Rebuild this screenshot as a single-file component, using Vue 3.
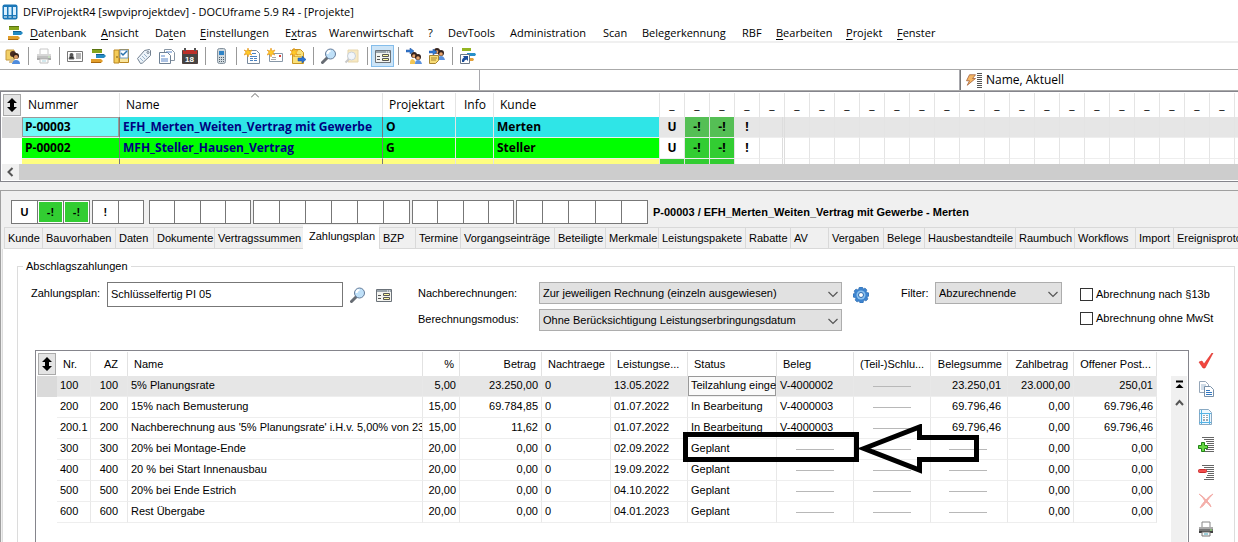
<script setup>
import { ref } from 'vue'

const menu = [
  ['', 'D', 'atenbank'], ['', 'A', 'nsicht'], ['Da', 't', 'en'], ['', 'E', 'instellungen'],
  ['E', 'x', 'tras'], ['Warenwirtschaft', '', ''], ['?', '', ''], ['DevTools', '', ''],
  ['Administration', '', ''], ['Scan', '', ''], ['Belegerkennung', '', ''], ['RBF', '', ''],
  ['', 'B', 'earbeiten'], ['', 'P', 'rojekt'], ['', 'F', 'enster']
]

const tools = [
  { icon: 'user', label: 'Adressen' }, null,
  { icon: 'printer', label: 'Drucken', dim: true }, null,
  { icon: 'card', label: 'Kontakt' }, { icon: 'bars', label: 'Projekte' },
  { icon: 'cupboard', label: 'Ablage' }, { icon: 'tag', label: 'Etikett' },
  { icon: 'docs', label: 'Dokumente' }, { icon: 'calendar', label: 'Kalender' }, null,
  { icon: 'phone', label: 'Telefon' }, null,
  { icon: 'newdoc', label: 'Neues Dokument' }, { icon: 'newmail', label: 'Neue Mail' },
  { icon: 'newfile', label: 'Neue Datei' }, null,
  { icon: 'lens', label: 'Suchen' }, { icon: 'searchfolder', label: 'Ordner suchen', dim: true }, null,
  { icon: 'form', label: 'Formular', active: true }, null,
  { icon: 'toperson', label: 'An Person' }, { icon: 'tonote', label: 'An Notiz' }, null,
  { icon: 'shortcut', label: 'Verknüpfung' }
]

const slots = 24
const projects = [
  { no: 'P-00003', name: 'EFH_Merten_Weiten_Vertrag mit Gewerbe', type: 'O', customer: 'Merten', flags: ['U', '-!', '-!', '!'], tone: 'cyan' },
  { no: 'P-00002', name: 'MFH_Steller_Hausen_Vertrag', type: 'G', customer: 'Steller', flags: ['U', '-!', '-!', '!'], tone: 'green' },
  { no: '', name: '', type: '', customer: '', flags: ['', '', '', ''], tone: 'yellow' }
]

const groups = [
  { cls: 'g3', cells: ['U', '-!', '-!'] },
  { cls: 'g2', cells: ['!', ''] },
  { cls: 'g4 wide-gap', cells: ['', '', '', ''] },
  { cls: 'g6', cells: ['', '', '', '', '', ''] },
  { cls: 'g4', cells: ['', '', '', ''] },
  { cls: 'g5', cells: ['', '', '', '', ''] }
]

const tabs = ['Kunde', 'Bauvorhaben', 'Daten', 'Dokumente', 'Vertragssummen', 'Zahlungsplan', 'BZP', 'Termine', 'Vorgangseinträge', 'Beteiligte', 'Merkmale', 'Leistungspakete', 'Rabatte', 'AV', 'Vergaben', 'Belege', 'Hausbestandteile', 'Raumbuch', 'Workflows', 'Import', 'Ereignisprotokoll']
const activeTab = ref('Zahlungsplan')
const plan = ref('Schlüsselfertig PI 05')

const head = ['Nr.', 'AZ', 'Name', '%', 'Betrag', 'Nachtraege', 'Leistungse...', 'Status', 'Beleg', '(Teil-)Schlu...', 'Belegsumme', 'Zahlbetrag', 'Offener Post...']
const align = ['', 'r az', '', 'r', 'r', '', '', '', '', '', 'r sum', 'r', 'r']
const rows = [
  ['100', '100', '5% Planungsrate', '5,00', '23.250,00', '0', '13.05.2022', 'Teilzahlung eingegangen', 'V-4000002', null, '23.250,01', '23.000,00', '250,01'],
  ['200', '200', '15% nach Bemusterung', '15,00', '69.784,85', '0', '01.07.2022', 'In Bearbeitung', 'V-4000003', null, '69.796,46', '0,00', '69.796,46'],
  ['200.1', '200', "Nachberechnung aus '5% Planungsrate' i.H.v. 5,00% von 23.250,00", '15,00', '11,62', '0', '01.07.2022', 'In Bearbeitung', 'V-4000003', null, '69.796,46', '0,00', '69.796,46'],
  ['300', '300', '20% bei Montage-Ende', '20,00', '0,00', '0', '02.09.2022', 'Geplant', null, null, null, '0,00', '0,00'],
  ['400', '400', '20 % bei Start Innenausbau', '20,00', '0,00', '0', '19.09.2022', 'Geplant', null, null, null, '0,00', '0,00'],
  ['500', '500', '20% bei Ende Estrich', '20,00', '0,00', '0', '04.10.2022', 'Geplant', null, null, null, '0,00', '0,00'],
  ['600', '600', 'Rest Übergabe', '20,00', '0,00', '0', '04.01.2023', 'Geplant', null, null, null, '0,00', '0,00']
]

const actions = [
  { icon: 'check', label: 'Übernehmen' },
  { icon: 'copy', label: 'Kopieren' },
  { icon: 'sheet', label: 'Tabelle' },
  { icon: 'addline', label: 'Zeile einfügen' },
  { icon: 'delline', label: 'Zeile entfernen' },
  { icon: 'cross', label: 'Löschen', dim: true },
  { icon: 'printer', label: 'Drucken' }
]
</script>

<template>
  <div class="app">
    <svg class="sprite" aria-hidden="true">
      <symbol id="i-app" viewBox="0 0 16 16"><rect x=".5" y=".5" width="15" height="15" rx="2" fill="#1976b8" /><path d="M2 3h3v8H2zM6.500 3h3v8h-3zM11 3h3v8h-3z" fill="#d9efff" /><path d="M2 13h3M6.500 13h3M11 13h3" stroke="#fff" /></symbol>
      <symbol id="i-bars" viewBox="0 0 16 16"><path d="M2 1h10v4H2z" fill="#86a51b" /><path d="M2 1h10v1H2z" fill="#58720f" /><path d="M6 6h8l2 2-2 2H6z" fill="#258bc4" /><path d="M6 6h8v1H6z" fill="#135f92" /><path d="M1 11h10l2 2-2 2H1z" fill="#e29e2b" /><path d="M1 14h10v1H1z" fill="#a9670d" /></symbol>
      <symbol id="i-user" viewBox="0 0 16 16"><path d="M1 3q0-1 1-1h7v10H1z" fill="#f2d068" stroke="#c4983b" /><circle cx="8" cy="6" r="3" fill="#4a2d20" /><circle cx="11" cy="8" r="3" fill="#34221b" /><circle cx="11" cy="9" r="2" fill="#dc9c65" /><path d="M7 16q0-4 4-4t4 4z" fill="#4f8cdd" /><path d="M4 15q0-4 3-5l2 2-2 3z" fill="#d9c18e" /></symbol>
      <symbol id="i-printer" viewBox="0 0 16 16"><path d="M4 1h8v6H4z" fill="#fff" stroke="#888" /><path d="M1 6h14v6H1z" fill="#777" /><path d="M1 6h14v2H1z" fill="#aaa" /><path d="M1 10h14v2H1z" fill="#414141" /><path d="M4 11h8v4H4z" fill="#f9f9f9" stroke="#777" /><path d="M6 13h4" stroke="#40a1b8" /><path d="M12 9h2" stroke="#8df46e" /></symbol>
      <symbol id="i-card" viewBox="0 0 16 16"><path d="M.5 3.500h15v10H.5z" fill="#fff" stroke="#777" /><circle cx="4.500" cy="7" r="2" fill="#555" /><path d="M2 11q0-3 2.500-3T7 11zM9 6h5M9 8h5M9 10h5" fill="#333" stroke="#666" /></symbol>
      <symbol id="i-cupboard" viewBox="0 0 16 16"><path d="M1 2h5v13H1z" fill="#f4cc58" stroke="#b98620" /><path d="M4 8v2" stroke="#7b5815" /><path d="M6.500 1.500h9v13h-9z" fill="#f9e49a" stroke="#b98620" /><path d="M7 2h8v8H7z" fill="#fff" stroke="#6d9ac5" /><path d="M8 5l2 2 4-4" fill="none" stroke="#2771ae" stroke-width="1.500" /></symbol>
      <symbol id="i-tag" viewBox="0 0 16 16"><path d="M1.500 10.500l7-8 5-1 1 1v5l-8 7.500-2 .5z" fill="#edf4fa" stroke="#728090" /><circle cx="12" cy="4.500" r="1" fill="#fff" stroke="#728090" /><path d="M4 10l3 3M6 8l3 3M8 6l3 3" stroke="#99b2ca" /></symbol>
      <symbol id="i-docs" viewBox="0 0 16 16"><path d="M5.500 1.500h7l3 3v8h-10z" fill="#fff" stroke="#8794a2" /><path d="M.5 4.500h8l3 3v8H.5z" fill="#fff" stroke="#6f8194" /><path d="M2 8h4M2 11h7M2 13h7M7 4h6" stroke="#5a86c8" /></symbol>
      <symbol id="i-calendar" viewBox="0 0 16 16"><path d="M.5 2.500h15v13H.5z" fill="#444" stroke="#50413e" /><path d="M1 2h14v4H1z" fill="#bb302a" /><path d="M3 0v3M13 0v3" stroke="#555" stroke-width="2" /><text x="3" y="14" font-size="8" font-weight="700" font-family="Liberation Sans, sans-serif" fill="#fff">18</text></symbol>
      <symbol id="i-phone" viewBox="0 0 16 16"><rect x="4.500" y=".5" width="8" height="15" rx="2" fill="#cfd8de" stroke="#85929e" /><path d="M6 3h5v4H6z" fill="#2f83c6" /><path d="M6 9.500h5M6 11.500h5M6 13.500h5" stroke="#53626c" stroke-dasharray="1 1" /></symbol>
      <symbol id="i-star" viewBox="0 0 16 16"><path d="M4 0l1 3 3-1-2 3 2 2-3-1-1 3-1-3-3 1 2-3-2-2 3 1z" fill="#ffca28" stroke="#e4931c" stroke-width=".6" /></symbol>
      <symbol id="i-newdoc" viewBox="0 0 16 16"><path d="M3.500 2.500h9l3 3v10h-12z" fill="#fff" stroke="#78899c" /><path d="M8 5.500h4M6 8.500h7M6 10.500h3M10 10.500h3M6 12.500h3M10 12.500h3" stroke="#4a82c0" /><use href="#i-star" /></symbol>
      <symbol id="i-newmail" viewBox="0 0 16 16"><path d="M2.500 5.500h13v8h-13z" fill="#fff" stroke="#8998a8" /><path d="M4 11.500h5M5 9.500h4" stroke="#aaa" /><path d="M12 7h2v2h-2z" fill="#d8423a" /><use href="#i-star" /></symbol>
      <symbol id="i-newfile" viewBox="0 0 16 16"><path d="M2.500 1.500h8l3 3v11h-11z" fill="#fae17a" stroke="#c99622" /><path d="M6 6.500h5M4 8.500h7" stroke="#e0b73e" /><path d="M8 10h4V8l4 3.500-4 3.500v-2H8z" fill="#2c74d3" stroke="#174f99" stroke-width=".5" /><use href="#i-star" /></symbol>
      <symbol id="i-lens" viewBox="0 0 16 16"><path d="M6.500 9.500l-5 5" stroke="#676c73" stroke-width="3" stroke-linecap="round" /><circle cx="9.500" cy="6" r="5" fill="#bfe0f8" stroke="#647b99" /><path d="M6.500 6q0-3 3-3" fill="none" stroke="#fff" stroke-width="2" /></symbol>
      <symbol id="i-searchfolder" viewBox="0 0 16 16"><path d="M4 2h10v12H4z" fill="#f0d078" stroke="#c8a34c" /><path d="M5.500 10.500l-4 4" stroke="#888" stroke-width="2" /><circle cx="7.500" cy="8" r="4" fill="#e3edf5" stroke="#8698ac" /></symbol>
      <symbol id="i-form" viewBox="0 0 16 16"><path d="M.5 2.500h15v12H.5z" fill="#f4f4f0" stroke="#6b7279" /><path d="M1 3h14v2H1z" fill="#9ba5ad" /><path d="M11 4h1M13 4h1" stroke="#fff" /><path d="M2 8.500h3M2 11.500h3" stroke="#555" /><path d="M7.500 6.500h6v2h-6zM7.500 10.500h6v2h-6z" fill="#fffa9e" stroke="#555" /></symbol>
      <symbol id="i-people" viewBox="0 0 16 16"><circle cx="8" cy="7" r="3" fill="#35221c" /><circle cx="8" cy="8" r="1.800" fill="#e8a66e" /><circle cx="12" cy="9" r="3" fill="#35221c" /><circle cx="12" cy="10" r="1.800" fill="#e8a66e" /><path d="M4 15q0-4 3-4l2 2v3H4z" fill="#f3c653" /><path d="M9 16q0-4 3-4t4 4z" fill="#5b91dd" /></symbol>
      <symbol id="i-arrow" viewBox="0 0 16 16"><path d="M0 2h4V0l4 3-4 3V4H0z" fill="#347cd4" stroke="#1d4f99" stroke-width=".5" /></symbol>
      <symbol id="i-toperson" viewBox="0 0 16 16"><use href="#i-people" /><use href="#i-arrow" /></symbol>
      <symbol id="i-tonote" viewBox="0 0 16 16"><use href="#i-people" y="-4" /><use href="#i-arrow" y="1" /><path d="M.5 7.500h9v5l-3 3h-6z" fill="#f8dc75" stroke="#a78431" /><path d="M2 10h6M2 12h5" stroke="#a78431" /></symbol>
      <symbol id="i-shortcut" viewBox="0 0 16 16"><path d="M2 0h9v3H2z" fill="#94b522" /><path d="M7 5h8l1 1.500L15 8H7z" fill="#278fc9" /><path d="M7 10h6l1 1.500-1 1.500H7z" fill="#e2a13b" /><path d="M.5 6.500h9v9h-9z" fill="#fff" stroke="#6b7888" /><path d="M2 14q-.5-3.500 2-4.500L3 8h5v5l-1.500-1.500Q4 12 4 14z" fill="#1c4e9a" /></symbol>
      <symbol id="i-bolt" viewBox="0 0 16 16"><path d="M6 1h8l-4 5h4L3 15l3-6H2z" fill="#f6b765" stroke="#9d5a32" /></symbol>
      <symbol id="i-sort" viewBox="0 0 14 14"><path d="M7 0l5 5H9v4h3l-5 5-5-5h3V5H2z" fill="#000" /></symbol>
      <symbol id="i-gear" viewBox="0 0 16 16"><path d="M6.500 0h3l.5 2 2-1 2 2-1 2 3 1v3l-2 1 1 2-2 2-2-1-1 3h-3L6 14l-2 1-2-2 1-2-3-1V7l2-1-1-2 2-2 2 1z" fill="#3d84cf" stroke="#2561a4" stroke-width=".5" /><circle cx="8" cy="8" r="4.500" fill="#8bc1ee" /><circle cx="8" cy="8" r="2.500" fill="#fff" stroke="#2a68ae" /></symbol>
      <symbol id="i-check" viewBox="0 0 16 16"><path d="M1 9l3-1 2 3 8-11h1L7 15H5z" fill="#f3463e" stroke="#d82d26" stroke-width=".6" /></symbol>
      <symbol id="i-copy" viewBox="0 0 16 16"><path d="M1.500.5h6l3 3v8h-9z" fill="#fff" stroke="#95a6b8" /><path d="M3 4h5M3 6h5M3 8h5" stroke="#a4bbd2" /><path d="M6.500 5.500h6l3 3v7h-9z" fill="#fff" stroke="#7890a8" /><path d="M8 9.500h4M8 11.500h6M8 13.500h6" stroke="#3478c0" /></symbol>
      <symbol id="i-sheet" viewBox="0 0 16 16"><path d="M1.500.5h9l3 3v12h-12z" fill="#eef8ff" stroke="#88a9c3" /><path d="M1 4.500h12M1 13.500h12M3.500 1v14M11.500 4v11" stroke="#55b3e5" /><path d="M5 6h5v6H5z" fill="#9ba9b5" /><path d="M7.500 6v6M5 7.500h5M5 9.500h5" stroke="#fff" /></symbol>
      <symbol id="i-lines" viewBox="0 0 16 16"><path d="M4 .5h12M6 2.500h10M8 4.500h8M9 6.500h7M10 8.500h6M9 10.500h7M8 12.500h8M6 14.500h10" stroke="#666" /></symbol>
      <symbol id="i-addline" viewBox="0 0 16 16"><use href="#i-lines" /><path d="M3.500 5.500h3v3h3v3h-3v3h-3v-3h-3v-3h3z" fill="#66d844" stroke="#218316" /></symbol>
      <symbol id="i-delline" viewBox="0 0 16 16"><use href="#i-lines" /><rect x=".5" y="4.500" width="8" height="3" rx="1" fill="#f34e4e" stroke="#c92b2b" /></symbol>
      <symbol id="i-cross" viewBox="0 0 16 16"><path d="M1 1q5 3 7 6 3-4 7-6-4 4-6 7 3 2 4 6-3-4-5-5-2 4-6 6 2-4 5-7-2-4-6-7z" fill="#e74d42" stroke="#e74d42" /></symbol>
      <symbol id="i-chevron" viewBox="0 0 16 16"><path d="M3.500 6l4.500 4.500L12.500 6" fill="none" stroke="#555" stroke-width="1.200" /></symbol>
    </svg>

    <header class="title"><svg class="ic"><use href="#i-app" /></svg><span>DFViProjektR4 [swpviprojektdev] - DOCUframe 5.9 R4 - [Projekte]</span></header>
    <nav class="menu">
      <svg class="ic"><use href="#i-bars" /></svg>
      <a v-for="m in menu" :key="m.join('')" href="#">{{ m[0] }}<u v-if="m[1]">{{ m[1] }}</u>{{ m[2] }}</a>
    </nav>
    <div class="toolbar">
      <template v-for="(t, i) in tools" :key="i">
        <span v-if="!t" class="sep"></span>
        <button v-else type="button" :class="{ active: t.active, dim: t.dim }" :aria-label="t.label"><svg class="ic"><use :href="'#i-' + t.icon" /></svg></button>
      </template>
    </div>

    <div class="quick">
      <input type="text" aria-label="Suche 1">
      <input type="text" aria-label="Suche 2">
      <button type="button"><svg class="bolt"><use href="#i-bolt" /></svg><span class="grip"></span>Name, Aktuell</button>
    </div>

    <section class="list">
      <div class="clip">
        <table class="projects">
          <colgroup><col class="p0"><col class="p1"><col class="p2"><col class="p3"><col class="p4"><col class="p5"><col v-for="n in slots" :key="n" class="ps"></colgroup>
          <thead>
            <tr>
              <th class="corner"><button type="button" aria-label="Sortieren"><svg><use href="#i-sort" /></svg></button></th>
              <th>Nummer</th><th class="sorted">Name<svg viewBox="0 0 8 5"><path d="M0 4.500l4-4 4 4" fill="none" stroke="#666" /></svg></th><th>Projektart</th><th class="info">Info</th><th>Kunde</th>
              <th v-for="n in slots" :key="n" class="slot">{{ n < slots ? '_' : '' }}</th>
            </tr>
          </thead>
          <tbody>
            <tr v-for="(p, i) in projects" :key="i" :class="[p.tone, { current: i === 0 }]">
              <td class="handle"></td>
              <td class="tone no">{{ p.no }}</td><td class="tone name">{{ p.name }}</td><td class="tone">{{ p.type }}</td><td class="tone"></td><td class="tone last">{{ p.customer }}</td>
              <td v-for="n in slots" :key="n" class="slot" :class="{ on: p.flags[n - 1] === '-!' || (i === 2 && n < 4), double: n === 5 }">{{ p.flags[n - 1] }}</td>
            </tr>
          </tbody>
        </table>
      </div>
      <div class="hscroll"><svg viewBox="0 0 16 16"><path d="M10 4L6 8l4 4" fill="none" stroke="#555" stroke-width="2" /></svg><span></span></div>
    </section>

    <main class="detail">
      <div class="strip">
        <div v-for="(g, i) in groups" :key="i" class="group" :class="g.cls"><span v-for="(c, k) in g.cells" :key="k" :class="{ on: c === '-!' }">{{ c }}</span></div>
        <strong>P-00003 / EFH_Merten_Weiten_Vertrag mit Gewerbe - Merten</strong>
      </div>
      <div class="tabs" role="tablist">
        <button v-for="t in tabs" :key="t" type="button" role="tab" :aria-selected="t === activeTab" :class="{ active: t === activeTab }" @click="activeTab = t">{{ t }}</button>
      </div>

      <div class="page">
        <fieldset>
          <legend>Abschlagszahlungen</legend>
          <div class="form">
            <label for="plan">Zahlungsplan:</label>
            <input id="plan" v-model="plan" type="text">
            <div class="pair">
              <button type="button" aria-label="Suchen"><svg class="ic"><use href="#i-lens" /></svg></button>
              <button type="button" aria-label="Formular"><svg class="ic"><use href="#i-form" /></svg></button>
            </div>
            <div class="labels"><label for="nach">Nachberechnungen:</label><label for="modus">Berechnungsmodus:</label></div>
            <div class="selects">
              <div class="sel"><select id="nach"><option>Zur jeweiligen Rechnung (einzeln ausgewiesen)</option></select><svg><use href="#i-chevron" /></svg></div>
              <div class="sel"><select id="modus"><option>Ohne Berücksichtigung Leistungserbringungsdatum</option></select><svg><use href="#i-chevron" /></svg></div>
            </div>
            <div class="pair"><button type="button" aria-label="Einstellungen"><svg class="ic"><use href="#i-gear" /></svg></button></div>
            <label for="filter">Filter:</label>
            <div class="sel"><select id="filter"><option>Abzurechnende</option></select><svg><use href="#i-chevron" /></svg></div>
            <div class="checks">
              <label><input type="checkbox">Abrechnung nach §13b</label>
              <label><input type="checkbox">Abrechnung ohne MwSt</label>
            </div>
          </div>

          <div class="work">
            <div class="grid">
              <table class="plan">
                <colgroup><col class="handle-col"><col v-for="(h, i) in head" :key="h" :class="'c' + i"></colgroup>
                <thead>
                  <tr>
                    <th class="corner"><button type="button" aria-label="Sortieren"><svg><use href="#i-sort" /></svg></button></th>
                    <th v-for="(h, i) in head" :key="h" :class="align[i]">{{ h }}</th>
                  </tr>
                </thead>
                <tbody>
                  <tr v-for="(r, i) in rows" :key="i" :class="{ current: i === 0 }">
                    <td class="handle"></td>
                    <td v-for="(c, k) in r" :key="k" :class="[align[k], { focus: i === 0 && k === 7 }]"><span v-if="c === null" class="dash"></span><template v-else>{{ c }}</template></td>
                  </tr>
                </tbody>
              </table>
              <div class="vscroll">
                <svg viewBox="0 0 16 16"><path d="M5 4.500h7" stroke="#000" stroke-width="2" /><path d="M8.500 7l4 4h-8z" /></svg>
                <svg viewBox="0 0 16 16"><path d="M5 10l3.500-4 3.500 4" fill="none" stroke="#555" stroke-width="2" /></svg>
              </div>
              <svg class="marks" viewBox="0 0 300 50" aria-hidden="true">
                <rect x="3.500" y="10.500" width="171" height="25" fill="none" stroke="#000" stroke-width="5" />
                <path d="M182 24.500L237.500 3V13.500H294.500V35.500H237.500V46Z" fill="none" stroke="#000" stroke-width="5" />
              </svg>
            </div>
            <div class="actions">
              <button v-for="a in actions" :key="a.icon" type="button" :aria-label="a.label" :class="{ dim: a.dim }"><svg class="ic"><use :href="'#i-' + a.icon" /></svg></button>
            </div>
          </div>
        </fieldset>
      </div>
    </main>
  </div>
</template>

<style>
body { margin: 0; overflow: hidden; }
</style>

<style scoped>
* { box-sizing: border-box; }
.app { height: 100vh; min-height: 0; display: flex; flex-direction: column; overflow: hidden; background: #f0f0f0; color: #000; font: 11px/14px "Liberation Sans", Arial, sans-serif; }
.sprite { position: absolute; width: 0; height: 0; }
.ic { width: 16px; height: 16px; display: block; flex: none; }
button { font: inherit; color: inherit; padding: 0; border: 0; background: none; }
.title, .menu, .toolbar, .quick, .list { flex: none; background: #fff; font: 12px/16px "Open Sans", "Segoe UI", sans-serif; }
.title, .menu { font-size: 11px; }
.title { height: 23px; display: flex; align-items: center; gap: 5px; padding-left: 2px; }
.menu { height: 20px; display: grid; grid-template-columns: 23px 71px 54px 45px 85px 44px 99px 20px 62px 93px 39px 100px 34px 70px 51px 1fr; align-items: center; padding: 1px 0 0 7px; border-bottom: 2px solid #f0f0f0; }
.menu a { color: #000; text-decoration: none; white-space: nowrap; }
.menu u { text-underline-offset: 2px; }
.toolbar { height: 26px; display: flex; align-items: center; padding-left: 1px; }
.toolbar button { width: 23px; height: 22px; display: grid; place-items: center; }
.toolbar .active { background: #cce4f7; border: 1px solid #84bdeb; }
.dim { opacity: .45; }
.sep { width: 8px; height: 18px; display: flex; justify-content: center; }
.sep::before { content: ""; width: 1px; background: #999; }
.quick { height: 22px; display: grid; grid-template-columns: 480px 480px 1fr; border-top: 1px solid #aaa; border-bottom: 1px solid #aaa; }
.quick > * { min-width: 0; border: solid #a8a8ad; border-width: 0 1px 0 0; background: #fff; outline: 0; }
.quick button { display: flex; align-items: center; padding-left: 4px; border-color: #777; border-width: 0 0 0 1px; }
.bolt { width: 12px; height: 14px; }
.grip { width: 5px; height: 15px; margin-right: 4px; background: repeating-linear-gradient(#555 0 1px, #fff 1px 2px); }

.list { border: 1px solid #85858c; border-right: 0; padding: 1px 0 1px 1px; }
.clip { overflow: hidden; height: 71px; }
table { table-layout: fixed; border-collapse: separate; border-spacing: 0; width: 0; }
th, td { padding: 0; text-align: left; font-weight: 400; white-space: nowrap; overflow: hidden; }
.p0 { width: 20px; } .p1 { width: 98px; } .p2 { width: 263px; } .p3 { width: 73px; } .p4 { width: 38px; } .p5 { width: 166px; } .ps { width: 25px; }
.projects th { height: 24px; padding-left: 6px; border-right: 1px solid #e4e4e4; }
.projects th.corner, .plan th.corner { padding: 1px; border-right: 0; }
.corner button { width: 18px; height: 22px; display: grid; place-items: center; background: #e4e4e4; border: 1px solid #aaa; }
.corner svg { width: 14px; height: 14px; }
.projects .info { padding-left: 8px; }
.sorted { position: relative; }
.sorted svg { position: absolute; left: 50%; top: 0; width: 8px; height: 5px; }
.projects th.slot { text-align: center; padding: 0; }
.projects td { height: 21px; padding-left: 3px; font-weight: 700; border-right: 1px solid #e4e4e4; border-bottom: 1px solid #eee; }
.projects td.handle { border: 0; }
.projects td.slot { padding: 0; text-align: center; }
.current .handle { background: #dadada; }
.current .slot { background: #e6e6e6; }
.projects .no, .projects .name { border-right-color: #777; }
.name { color: #000080; }
.cyan .tone { background: #2fe5e7; }
.cyan .no { background: #6ff8f8; box-shadow: inset 0 0 0 1px #999; }
.green .tone { background: #0f0; }
.yellow .tone { background: #ffff80; }
.projects .on { background: #32cd32; }
.projects .current .on { background: #55bf55; }
.projects .double { border-right-width: 3px; border-right-style: double; border-right-color: #ddd; }
.hscroll { height: 16px; display: flex; background: #f0f0f0; }
.hscroll svg { width: 17px; height: 16px; }
.hscroll span { flex: 1; background: #cdcdcd; }

.detail { flex: 1; min-height: 0; margin-top: 8px; border: 1px solid #a0a0a0; border-width: 1px 0 0 1px; display: flex; flex-direction: column; overflow: hidden; }
.strip { height: 33px; flex: none; display: flex; align-items: flex-end; padding-left: 10px; }
.group { height: 24px; display: grid; grid-auto-flow: column; grid-auto-columns: 1fr; margin-right: 2px; border-left: 1px solid #777; }
.group span { display: grid; place-items: center; background: #fff; border: solid #777; border-width: 1px 1px 1px 0; font-weight: 700; }
.group .on { background: #32cd32; box-shadow: inset 0 0 0 1px #fff; }
.g3 { width: 79px; } .g2 { width: 52px; } .g4 { width: 102px; } .g6 { width: 157px; } .g5 { width: 132px; }
.wide-gap { margin-left: 3px; }
.strip strong { line-height: 24px; margin-left: 3px; white-space: nowrap; }
.tabs { height: 25px; flex: none; display: grid; grid-template-columns: 38px 73px 38px 61px 89px 76px 36px 45px 94px 51px 53px 87px 45px 38px 55px 41px 91px 59px 61px 38px 100px; align-items: end; padding-left: 3px; }
.tabs button { height: 22px; padding-left: 3px; text-align: left; white-space: nowrap; border: 1px solid #d9d9d9; border-right: 0; }
.tabs .active { height: 24px; padding-bottom: 2px; background: #fff; border: 0; padding-left: 6px; }
.page { flex: 1; background: #fff; margin-left: 1px; border-left: 1px solid #ddd; padding: 10px 3px 0 14px; }
fieldset { margin: 0; padding: 0; border: 1px solid #dcdcdc; min-width: 0; height: 400px; }
legend { margin-left: 5px; padding: 0 3px; }
.form { display: flex; align-items: flex-start; padding: 9px 0 0 13px; }
.form > label { line-height: 23px; white-space: nowrap; }
.form label[for=plan] { width: 76px; }
.form > input { width: 236px; height: 25px; padding: 0 0 2px 3px; border: 1px solid #777; font: inherit; outline: 0; }
.pair { display: flex; gap: 10px; padding: 5px 0 0 7px; }
.labels { margin-left: 26px; width: 121px; display: flex; flex-direction: column; gap: 3px; line-height: 23px; }
.selects { display: flex; flex-direction: column; gap: 5px; width: 303px; }
.sel { position: relative; }
.sel select { appearance: none; width: 100%; height: 22px; padding: 0 18px 0 3px; border: 1px solid #adadad; border-radius: 0; background: #e1e1e1; font: inherit; color: #000; display: block; }
.sel svg { position: absolute; right: 1px; top: 4px; width: 16px; height: 16px; pointer-events: none; }
.selects + .pair { padding-left: 11px; }
.form label[for=filter] { margin-left: 32px; width: 34px; }
.form > .sel { width: 127px; }
.checks { margin-left: 18px; padding-top: 5px; display: flex; flex-direction: column; gap: 10px; white-space: nowrap; }
.checks label { display: flex; align-items: center; gap: 3px; }
.checks input { appearance: none; margin: 0; width: 13px; height: 13px; border: 1px solid #333; background: #fff; }
.work { display: flex; margin: 19px 0 0 17px; height: 240px; }
.grid { position: relative; flex: 1; min-width: 0; border: 1px solid #85858c; padding: 1px 1px 0 1px; overflow: hidden; display: flex; justify-content: space-between; }
.plan { flex: none; align-self: flex-start; }
.handle-col { width: 20px; } .c0 { width: 34px; } .c1 { width: 37px; } .c2 { width: 295px; } .c3 { width: 37px; } .c4 { width: 82px; } .c5 { width: 69px; } .c6 { width: 77px; } .c7 { width: 89px; } .c8 { width: 77px; } .c9 { width: 77px; } .c10 { width: 77px; } .c11 { width: 66px; } .c12 { width: 83px; }
.plan th { height: 24px; padding: 0 5px 0 6px; border-right: 1px solid #e2e2e2; }
.plan td { height: 21px; padding: 0 3px 2px 3px; border-right: 1px solid #e8e8e8; border-bottom: 1px solid #eee; }
.plan td.handle { border: 0; padding: 0; }
.plan .r { text-align: right; }
.plan .az { padding-right: 9px; }
.plan td.sum { padding-right: 6px; }
.plan .current td:not(.handle) { background: #e6e6e6; }
.plan .current td.focus:not(.handle) { background: #fafafa; box-shadow: inset 0 0 0 1px #999; }
.dash { display: block; width: 38px; height: 1px; margin: 2px auto 0; background: #b8b8b8; }
.vscroll { width: 16px; margin-top: 24px; background: #f0f0f0; }
.vscroll svg { display: block; width: 16px; height: 18px; }
.marks { position: absolute; left: 646px; top: 73px; width: 300px; height: 50px; }
.actions { width: 45px; display: flex; flex-direction: column; gap: 12px; padding: 3px 0 0 9px; }
.actions button { width: 16px; height: 16px; }
</style>
